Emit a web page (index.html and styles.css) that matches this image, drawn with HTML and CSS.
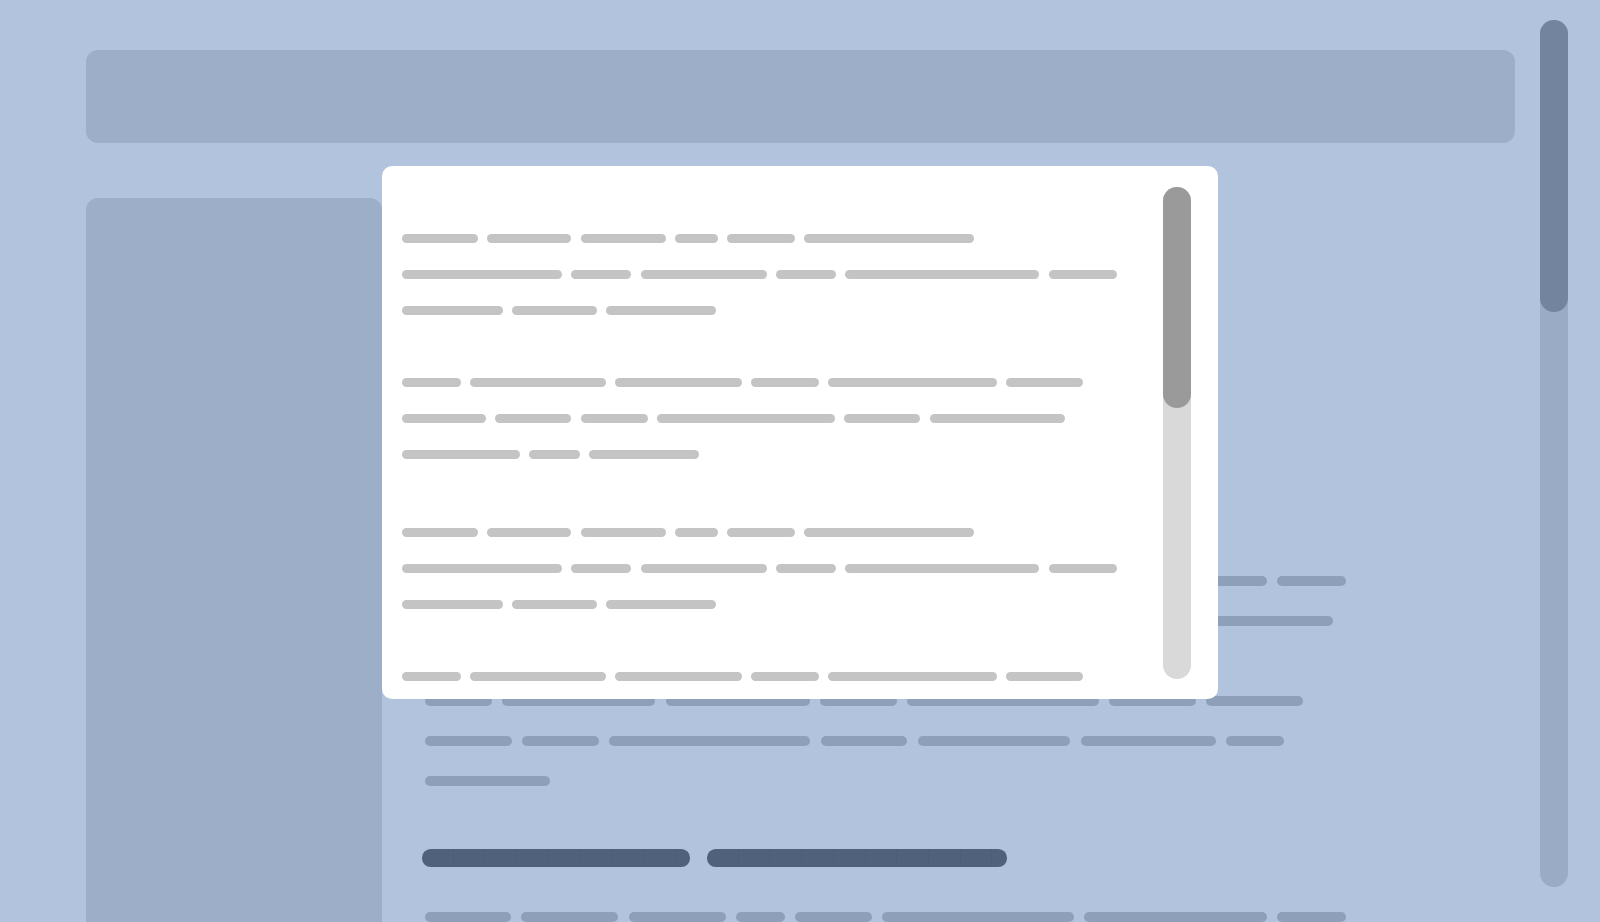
FILE: index.html
```html
<!DOCTYPE html>
<html lang="en">
<head>
<meta charset="utf-8">
<title>Page with dialog</title>
<link rel="stylesheet" href="styles.css">
</head>
<body>
<div class="page">
  <header class="topbar"></header>
  <div class="layout">
    <aside class="sidebar"></aside>
    <main class="content">
      <div class="para">
        <div class="line"><i style="width:120px"></i><i style="width:86px"></i><i style="width:150px"></i><i style="width:97px"></i><i style="width:180px"></i></div>
        <div class="line"><i style="width:97px"></i><i style="width:200px"></i><i style="width:76px"></i><i style="width:140px"></i></div>
        <div class="line"><i style="width:160px"></i><i style="width:90px"></i></div>
      </div>
      <div class="heading"><i style="width:220px"></i><i style="width:180px"></i></div>
      <div class="para after-heading">
        <div class="line"><i style="width:86px"></i><i style="width:150px"></i><i style="width:97px"></i><i style="width:120px"></i><i style="width:76px"></i></div>
        <div class="line"><i style="width:140px"></i><i style="width:97px"></i><i style="width:192px"></i><i style="width:86px"></i><i style="width:150px"></i></div>
        <div class="line"><i style="width:76px"></i><i style="width:182px"></i><i style="width:97px"></i><i style="width:140px"></i><i style="width:120px"></i></div>
        <div class="line"><i style="width:86px"></i><i style="width:97px"></i><i style="width:97px"></i><i style="width:49px"></i><i style="width:76.4px"></i><i style="width:192px"></i><i style="width:182.7px"></i><i style="width:68.5px"></i></div>
        <div class="line"><i style="width:97px"></i><i style="width:140px"></i><i style="width:76px"></i><i style="width:192px"></i><i style="width:110px"></i><i style="width:86px"></i><i style="width:145.5px"></i></div>
      </div>
      <div class="para after-para">
        <div class="line"><i style="width:66.7px"></i><i style="width:153.4px"></i><i style="width:144px"></i><i style="width:76.7px"></i><i style="width:192px"></i><i style="width:86.7px"></i><i style="width:96.7px"></i></div>
        <div class="line"><i style="width:86.7px"></i><i style="width:77px"></i><i style="width:201px"></i><i style="width:86.7px"></i><i style="width:152.7px"></i><i style="width:135px"></i><i style="width:58px"></i></div>
        <div class="line"><i style="width:124.7px"></i></div>
      </div>
      <div class="heading"><i style="width:268.3px"></i><i style="width:300.3px"></i></div>
      <div class="para after-heading">
        <div class="line"><i style="width:86px"></i><i style="width:97px"></i><i style="width:97px"></i><i style="width:49px"></i><i style="width:76.4px"></i><i style="width:192px"></i><i style="width:182.7px"></i><i style="width:68.5px"></i></div>
        <div class="line"><i style="width:97px"></i><i style="width:140px"></i><i style="width:76px"></i><i style="width:192px"></i><i style="width:110px"></i><i style="width:86px"></i></div>
      </div>
    </main>
  </div>
</div>

<div class="page-scroll"><div class="page-thumb"></div></div>

<div class="modal">
  <div class="modal-body">
    <div class="mpara a">
      <div class="mline"><i style="width:76px"></i><i style="width:84.5px"></i><i style="width:85.5px"></i><i style="width:43px"></i><i style="width:67.5px"></i><i style="width:169.5px"></i></div>
      <div class="mline"><i style="width:160.5px"></i><i style="width:60px"></i><i style="width:126.5px"></i><i style="width:60px"></i><i style="width:194px"></i><i style="width:68.5px"></i></div>
      <div class="mline"><i style="width:101.5px"></i><i style="width:84.5px"></i><i style="width:110px"></i></div>
    </div>
    <div class="mpara b">
      <div class="mline"><i style="width:59.5px"></i><i style="width:135.5px"></i><i style="width:127px"></i><i style="width:67.5px"></i><i style="width:169px"></i><i style="width:76.5px"></i></div>
      <div class="mline"><i style="width:84.5px"></i><i style="width:76px"></i><i style="width:67.5px"></i><i style="width:177.5px"></i><i style="width:76.5px"></i><i style="width:135px"></i></div>
      <div class="mline"><i style="width:118.5px"></i><i style="width:50.5px"></i><i style="width:110px"></i></div>
    </div>
    <div class="mpara a">
      <div class="mline"><i style="width:76px"></i><i style="width:84.5px"></i><i style="width:85.5px"></i><i style="width:43px"></i><i style="width:67.5px"></i><i style="width:169.5px"></i></div>
      <div class="mline"><i style="width:160.5px"></i><i style="width:60px"></i><i style="width:126.5px"></i><i style="width:60px"></i><i style="width:194px"></i><i style="width:68.5px"></i></div>
      <div class="mline"><i style="width:101.5px"></i><i style="width:84.5px"></i><i style="width:110px"></i></div>
    </div>
    <div class="mpara b">
      <div class="mline"><i style="width:59.5px"></i><i style="width:135.5px"></i><i style="width:127px"></i><i style="width:67.5px"></i><i style="width:169px"></i><i style="width:76.5px"></i></div>
      <div class="mline"><i style="width:84.5px"></i><i style="width:76px"></i><i style="width:67.5px"></i><i style="width:177.5px"></i><i style="width:76.5px"></i><i style="width:135px"></i></div>
      <div class="mline"><i style="width:118.5px"></i><i style="width:50.5px"></i><i style="width:110px"></i></div>
    </div>
  </div>
  <div class="modal-scroll"><div class="modal-thumb"></div></div>
</div>
</body>
</html>
```

FILE: styles.css
```css
html, body {
  margin: 0;
  padding: 0;
  height: 100%;
  overflow: hidden;
}

body {
  background: #b1c3dd;
  font-family: "Liberation Sans", Arial, sans-serif;
}

.page {
  padding: 50px 85px 0 86px;
}

.topbar {
  height: 93px;
  background: #9daec8;
  border-radius: 12px;
}

.layout {
  display: flex;
  margin-top: 55px;
}

.sidebar {
  width: 296px;
  flex: none;
  min-height: 900px;
  background: #9daec8;
  border-radius: 12px 12px 0 0;
}

.content {
  flex: 1;
  padding: 42px 0 0 43px;
  display: flex;
  flex-direction: column;
}

.para {
  display: flex;
  flex-direction: column;
  gap: 30px;
}

.para.after-heading {
  margin-top: 45.3px;
}

.para.after-para {
  margin-top: 70px;
}

.line {
  display: flex;
  gap: 10.3px;
  height: 10px;
}

.line i {
  display: block;
  height: 10px;
  border-radius: 5px;
  background: #8d9fb9;
  flex: none;
}

.heading {
  display: flex;
  gap: 16.7px;
  height: 17.4px;
  margin-top: 63.3px;
  margin-left: -3.3px;
}

.heading i {
  display: block;
  height: 17.4px;
  border-radius: 8.7px;
  flex: none;
  background-color: #50617b;
  background-image: repeating-linear-gradient(90deg, transparent 0, transparent 30.7px, rgba(40, 52, 72, 0.08) 30.7px, rgba(40, 52, 72, 0.08) 31.7px);
}

/* page scrollbar overlay */
.page-scroll {
  position: fixed;
  top: 20px;
  right: 32px;
  width: 28px;
  height: 867px;
  border-radius: 14px;
  background: #9aabc5;
}

.page-thumb {
  height: 292px;
  border-radius: 14px;
  background: #73849e;
}

/* dialog */
.modal {
  position: absolute;
  left: 382px;
  top: 166px;
  width: 836px;
  height: 533px;
  background: #ffffff;
  border-radius: 10px;
  overflow: hidden;
}

.modal-body {
  padding: 68px 0 0 19.7px;
  display: flex;
  flex-direction: column;
}

.mpara {
  display: flex;
  flex-direction: column;
  gap: 27px;
}

.mpara.a {
  margin-bottom: 63px;
}

.mpara.b {
  margin-bottom: 69px;
}

.mline {
  display: flex;
  gap: 9.2px;
  height: 9px;
}

.mline i {
  display: block;
  height: 9px;
  border-radius: 4.5px;
  background: #c4c4c4;
  flex: none;
}

.modal-scroll {
  position: absolute;
  top: 21px;
  right: 27px;
  width: 28px;
  height: 492px;
  border-radius: 14px;
  background: #d9d9d9;
}

.modal-thumb {
  height: 221px;
  border-radius: 14px;
  background: #9a9a9a;
}
```
